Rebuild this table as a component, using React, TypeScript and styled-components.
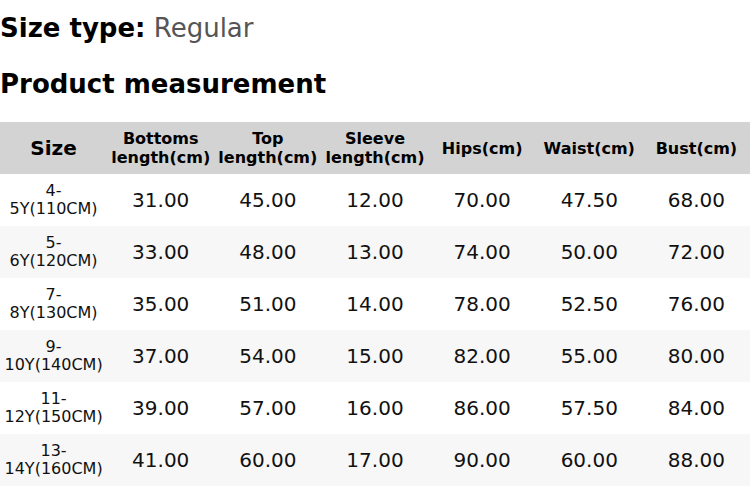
import React from 'react'
import styled, { createGlobalStyle } from 'styled-components'

const GlobalStyle = createGlobalStyle`
  body {
    margin: 0;
    background: #fff;
    font-family: 'DejaVu Sans', sans-serif;
    color: #000;
  }
`

const Page = styled.div`
  width: 750px;
`

const SizeType = styled.div`
  font-size: 26px;
  line-height: 30px;
  padding-top: 13px;
`

const Label = styled.span`
  font-weight: bold;
`

const Value = styled.span`
  color: #555;
`

const Heading = styled.h2`
  margin: 26px 0 0;
  font-size: 26px;
  line-height: 30px;
  font-weight: bold;
`

const Table = styled.table`
  margin-top: 23px;
  width: 750px;
  border-collapse: collapse;
  table-layout: fixed;
`

const HeadRow = styled.tr`
  background: #d3d3d3;
  height: 52px;
`

const Th = styled.th<{ $big?: boolean }>`
  font-size: ${({ $big }) => ($big ? '20px' : '16px')};
  line-height: 19px;
  font-weight: bold;
  text-align: center;
  padding: 0;
`

const Row = styled.tr<{ $alt: boolean }>`
  background: ${({ $alt }) => ($alt ? '#f7f7f7' : '#fff')};
  height: 52px;
`

const SizeCell = styled.td`
  font-size: 16px;
  line-height: 18px;
  text-align: center;
  color: #111;
  padding: 0;
`

const Td = styled.td`
  font-size: 20px;
  text-align: center;
  color: #111;
  padding: 0;
`

const headers = [
  ['Bottoms', 'length(cm)'],
  ['Top', 'length(cm)'],
  ['Sleeve', 'length(cm)'],
  ['Hips(cm)'],
  ['Waist(cm)'],
  ['Bust(cm)'],
]

const rows = [
  ['4-', '5Y(110CM)', '31.00', '45.00', '12.00', '70.00', '47.50', '68.00'],
  ['5-', '6Y(120CM)', '33.00', '48.00', '13.00', '74.00', '50.00', '72.00'],
  ['7-', '8Y(130CM)', '35.00', '51.00', '14.00', '78.00', '52.50', '76.00'],
  ['9-', '10Y(140CM)', '37.00', '54.00', '15.00', '82.00', '55.00', '80.00'],
  ['11-', '12Y(150CM)', '39.00', '57.00', '16.00', '86.00', '57.50', '84.00'],
  ['13-', '14Y(160CM)', '41.00', '60.00', '17.00', '90.00', '60.00', '88.00'],
]

const App = () => {
  return (
    <Page>
      <GlobalStyle />
      <SizeType>
        <Label>Size type:</Label> <Value>Regular</Value>
      </SizeType>
      <Heading>Product measurement</Heading>
      <Table>
        <thead>
          <HeadRow>
            <Th $big>Size</Th>
            {headers.map((h) => (
              <Th key={h.join()}>
                {h.map((line, i) => (
                  <React.Fragment key={line}>
                    {i > 0 && <br />}
                    {line}
                  </React.Fragment>
                ))}
              </Th>
            ))}
          </HeadRow>
        </thead>
        <tbody>
          {rows.map(([a, b, ...vals], i) => (
            <Row key={b} $alt={i % 2 === 1}>
              <SizeCell>
                {a}
                <br />
                {b}
              </SizeCell>
              {vals.map((v, j) => (
                <Td key={j}>{v}</Td>
              ))}
            </Row>
          ))}
        </tbody>
      </Table>
    </Page>
  )
}

export default App
